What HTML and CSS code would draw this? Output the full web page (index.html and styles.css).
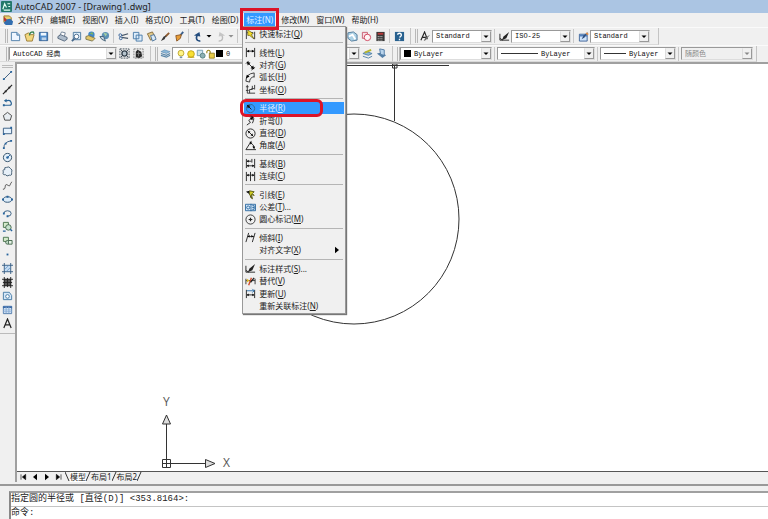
FILE: index.html
```html
<!DOCTYPE html>
<html lang="zh-CN">
<head>
  <meta charset="utf-8">
  <title>AutoCAD 2007 - [Drawing1.dwg]</title>
  <link rel="stylesheet" href="styles.css">
</head>
<body>
  <!-- icon sprite -->
  <svg class="sprite" aria-hidden="true">
    <symbol id="app" viewBox="0 0 12 12"><rect width="12" height="12" rx="1" fill="#23776b"/><path d="M2 9L4 3L6 7M7 3H10M8 6H10M3 10H10" stroke="#e5fff4" fill="none" stroke-width="1.3"/></symbol>
    <symbol id="dwg" viewBox="0 0 12 12"><path d="M1 1H7L9 3V8H1Z" fill="#e9d070" stroke="#98762a"/><path d="M3 5L8 4L11 7L10 11H3L1 9Z" fill="#326eb0"/><path d="M1 2L4 5L3 7L1 6Z" fill="#b33"/></symbol>
    <symbol id="new" viewBox="0 0 12 12"><path d="M1.500 1.500H7.500L10.500 4.500V10.500H1.500Z" fill="#eef6ff" stroke="#4d7da8"/><path d="M7.500 1.500V4.500H10.500" fill="#a8c9e6" stroke="#4d7da8"/></symbol>
    <symbol id="open" viewBox="0 0 12 12"><path d="M1 4L5 2L7 4H11L9 11H3Z" fill="#f2d67d" stroke="#9a7c34"/><path d="M6 5Q6 1 10 1L11 3" fill="none" stroke="#388452" stroke-width="1.500"/></symbol>
    <symbol id="save" viewBox="0 0 12 12"><path d="M1.500 1.500H10.500V10.500H1.500Z" fill="#4f8ccb" stroke="#315f94"/><path d="M3 2H9V5H3Z" fill="#eef7ff"/><path d="M4 7H9V10H4Z" fill="#bcd3ea"/></symbol>
    <symbol id="plot" viewBox="0 0 12 12"><path d="M3 5L5 1L9 2L8 6" fill="#fff" stroke="#6d7f94"/><path d="M1 6L4 4L11 7V9L8 11L1 8Z" fill="#aebccb" stroke="#53667b"/></symbol>
    <symbol id="preview" viewBox="0 0 12 12"><path d="M2.500 1.500H10.500V9.500H2.500Z" fill="#dcecf9" stroke="#4c789f"/><circle cx="6" cy="6" r="2.500" fill="#fff" stroke="#486a8c"/><path d="M4 8L1 11" stroke="#486a8c" stroke-width="2"/></symbol>
    <symbol id="publish" viewBox="0 0 12 12"><circle cx="7" cy="4" r="3.500" fill="#3f87c8"/><path d="M5 3L8 1L9 4Z" fill="#82b65d"/><path d="M1 6L4 5L11 8L8 11L1 9Z" fill="#e2c769" stroke="#7c7650"/></symbol>
    <symbol id="dwf" viewBox="0 0 12 12"><circle cx="7" cy="5" r="4" fill="#5e91b6"/><path d="M5 2L9 3L7 6Z" fill="#a5d09e"/><path d="M1 6H5L7 11L3 9Z" fill="#c8d6e2" stroke="#446075"/></symbol>
    <symbol id="cut" viewBox="0 0 12 12"><path d="M4 5L11 3M4 7L11 8" stroke="#4a5868" stroke-width="1.300"/><circle cx="2.500" cy="4.500" r="1.500" fill="none" stroke="#39659b"/><circle cx="3" cy="8" r="1.500" fill="none" stroke="#39659b"/></symbol>
    <symbol id="copy" viewBox="0 0 12 12"><path d="M1.500 1.500H7.500V8.500H1.500ZM4.500 4.500H11V11H4.500Z" fill="#dcecfa" stroke="#467aa8"/></symbol>
    <symbol id="paste" viewBox="0 0 12 12"><path d="M1.500 3L7 1L10 7L5 10Z" fill="#e4cb8b" stroke="#856936"/><path d="M5 5L9 4L11 9L7 11Z" fill="#d9eafa" stroke="#4b7399"/></symbol>
    <symbol id="brush" viewBox="0 0 12 12"><path d="M10 2L6 6" stroke="#8e5b30" stroke-width="2"/><path d="M7 5L5 9L1 11L4 6Z" fill="#343434"/></symbol>
    <symbol id="block" viewBox="0 0 12 12"><path d="M10 1L6 6" stroke="#375d8b" stroke-width="2"/><path d="M2 5L8 4L7 8L3 11Z" fill="#e69d37" stroke="#8d5724"/></symbol>
    <symbol id="undo" viewBox="0 0 12 12"><path d="M8 11C3 11 3 7 5 4" fill="none" stroke="#244d7e" stroke-width="1.800"/><path d="M1 5L7 1L8 6Z" fill="#244d7e"/></symbol>
    <symbol id="redo" viewBox="0 0 12 12"><path d="M4 11C9 11 9 7 7 4" fill="none" stroke="#bbb" stroke-width="1.500"/><path d="M11 5L5 1L4 6Z" fill="#c5c5c5"/></symbol>
    <symbol id="down" viewBox="0 0 12 12"><path d="M1 4H11L6 9Z"/></symbol>
    <symbol id="sheets" viewBox="0 0 12 12"><path d="M1 2L7 1L11 4V10L5 11L1 8Z" fill="#acd1e5" stroke="#50799a"/><path d="M2 6L6 4L9 9" fill="none" stroke="#fff" stroke-width="2"/></symbol>
    <symbol id="markup" viewBox="0 0 12 12"><path d="M1.500 1.500H7V8H1.500Z" fill="#f8dce2" stroke="#c75b70"/><circle cx="7" cy="7" r="3.500" fill="#fff4f5" stroke="#cd4058"/></symbol>
    <symbol id="calc" viewBox="0 0 12 12"><path d="M1.500 1H10.500V11H1.500Z" fill="#373737"/><path d="M3 2H9V4H3Z" fill="#b93838"/><path d="M3 6H9M3 8H9M3 10H9" stroke="#ddd" stroke-dasharray="1 1"/></symbol>
    <symbol id="help" viewBox="0 0 12 12"><path d="M1 1H11V11H1Z" fill="#28618f"/><path d="M4 4Q4 2.500 6 2.500T8 4.500Q8 5.500 6 7M6 8.500V10" stroke="#fff" fill="none" stroke-width="1.500"/></symbol>
    <symbol id="tstyle" viewBox="0 0 12 12"><path d="M1 10L5 1L8 9M3 7H7" fill="none" stroke="#222" stroke-width="1.200"/><path d="M11 4L6 10L4 11L6 7Z" fill="#666"/></symbol>
    <symbol id="dstyle" viewBox="0 0 12 12"><path d="M1 3V10H11M1 8L4 10" stroke="#222" fill="none"/><path d="M11 1L8 8L3 10L5 6Z" fill="#222"/></symbol>
    <symbol id="tablestyle" viewBox="0 0 12 12"><path d="M1.500 3.500H10V11H1.500Z" fill="#cfe3fa" stroke="#3c6397"/><path d="M2 4H10V6H2Z" fill="#517fbd"/><path d="M11 1L7 7L4 9L6 5Z" fill="#315080"/><path d="M9 2L11 4" stroke="#dd8b45" stroke-width="2"/></symbol>
    <symbol id="gear" viewBox="0 0 12 12"><path d="M1 1H11V11H1Z" fill="none" stroke="#3e4b57" stroke-dasharray="2 1"/><circle cx="6" cy="6" r="2.800" fill="#b7c5ce" stroke="#33414d" stroke-width="1.500"/><path d="M2 2L4 4M10 2L8 4M2 10L4 8M10 10L8 8" stroke="#33414d"/></symbol>
    <symbol id="wsave" viewBox="0 0 12 12"><path d="M1 1H11V11H1Z" fill="none" stroke="#777" stroke-dasharray="2 1"/><path d="M3 4L5 2L9 4L10 9L7 11L3 10Z" fill="#292929"/><path d="M4 6H8M6 4V9" stroke="#777"/></symbol>
    <symbol id="layers" viewBox="0 0 12 12"><path d="M1 4L5 2L11 4L7 6Z" fill="#8bb7d7" stroke="#5483aa" stroke-width=".6"/><path d="M1 6L7 8L11 6M1 8L7 10L11 8" fill="none" stroke="#5a86a8" stroke-width="1.300"/></symbol>
    <symbol id="layerprev" viewBox="0 0 12 12"><path d="M1 6L5 4L11 6L7 8Z" fill="#8eb9dc" stroke="#5381a6"/><path d="M1 9L7 11L11 9" fill="none" stroke="#5381a6"/><path d="M3 5L10 2" stroke="#b6b52e" stroke-width="2"/></symbol>
    <symbol id="layerstate" viewBox="0 0 12 12"><path d="M1 6L6 5L11 8L7 11Z" fill="#547fa7"/><path d="M4 1L9 2V8L5 7Z" fill="#b9d4ec" stroke="#507ba5"/></symbol>
    <symbol id="bulb" viewBox="0 0 12 12"><circle cx="6" cy="5" r="3.500" fill="#fff486" stroke="#b79e25"/><path d="M4.500 9H7.500V11H4.500Z" fill="#7692a6"/></symbol>
    <symbol id="sun" viewBox="0 0 12 12"><circle cx="6" cy="6" r="4" fill="#f8df34" stroke="#b99b12"/><path d="M2 10H10" stroke="#b99b12"/></symbol>
    <symbol id="vpfreeze" viewBox="0 0 12 12"><path d="M1.500 1.500H8V8H1.500Z" fill="#cfe3ed" stroke="#6a95ad"/><circle cx="8" cy="8" r="3" fill="#8db0b4" stroke="#527d80"/></symbol>
    <symbol id="lock" viewBox="0 0 12 12"><path d="M1 5V3Q3 0 5 3V6" fill="none" stroke="#99851b" stroke-width="1.300"/><path d="M4 5H10V11H4Z" fill="#e6cb48" stroke="#8b761c"/></symbol>

    <symbol id="line" viewBox="0 0 12 12"><path d="M2 10L10 2" stroke="#34557a"/><path d="M1 9H3V11H1ZM9 1H11V3H9Z" fill="#26639c"/></symbol>
    <symbol id="xline" viewBox="0 0 12 12"><path d="M1 11L11 1" stroke="#222" stroke-width="1.200"/><path d="M3 7H5V9H3ZM7 3H9V5H7Z" fill="#222"/></symbol>
    <symbol id="pline" viewBox="0 0 12 12"><path d="M1 9H8Q11 9 10 6T6 4H4" fill="none" stroke="#2a6496" stroke-width="1.300"/><path d="M5 2V6L2 4ZM1 8H3V10H1Z" fill="#2a6496"/></symbol>
    <symbol id="polygon" viewBox="0 0 12 12"><path d="M6 1.500L10.500 5L9 10H3L1.500 5Z" fill="#e8edf1" stroke="#444"/></symbol>
    <symbol id="rect" viewBox="0 0 12 12"><path d="M1.500 3.500H10.500V9.500H1.500Z" fill="#e6f2fd" stroke="#34597e"/><path d="M1 9H3V11H1ZM9 2H11V4H9Z" fill="#26639c"/></symbol>
    <symbol id="arc" viewBox="0 0 12 12"><path d="M2 10Q2 3 10 2" fill="none" stroke="#34597e"/><path d="M1 9H3V11H1ZM3 4H5V6H3ZM9 1H11V3H9Z" fill="#26639c"/></symbol>
    <symbol id="circle" viewBox="0 0 12 12"><circle cx="6" cy="6" r="4.500" fill="#e4f0fa" stroke="#2b4963"/><path d="M6 6L9 3" stroke="#26639c"/><circle cx="6" cy="6" r="1.400" fill="#26639c"/></symbol>
    <symbol id="cloud" viewBox="0 0 12 12"><path d="M3 4Q2 1 5 1.500Q8 0 9 2.500Q12 4 10.500 7Q11 11 8 10Q5 12 4 9.500Q0 10 1.500 6.500Q0 4 3 4Z" fill="#e7f0f8" stroke="#405a70"/></symbol>
    <symbol id="spline" viewBox="0 0 12 12"><path d="M1 10C5 11 2 3 6 5.500S8 4 11 2" fill="none" stroke="#444"/></symbol>
    <symbol id="ellipse" viewBox="0 0 12 12"><ellipse cx="6" cy="6" rx="4.500" ry="3" fill="#dcecf9" stroke="#254c70"/><path d="M0 5H2V7H0ZM10 5H12V7H10ZM5 2H7V4H5Z" fill="#26639c"/></symbol>
    <symbol id="earc" viewBox="0 0 12 12"><path d="M2 6Q2 3 6 3T10 6Q10 9 6 9" fill="none" stroke="#315b80"/><path d="M1 5H3V7H1ZM5 8H7V10H5Z" fill="#26639c"/></symbol>
    <symbol id="insert" viewBox="0 0 12 12"><path d="M1.500 1.500H7V7H1.500Z" fill="#d5eacb" stroke="#47724b"/><circle cx="7" cy="7" r="3" fill="#c7e2cd" stroke="#42664a"/><path d="M1 11H4M9 9L11 11" stroke="#26639c" stroke-width="1.500"/></symbol>
    <symbol id="mkblock" viewBox="0 0 12 12"><path d="M1.500 2.500H7V7H1.500Z" fill="#d5eacb" stroke="#47724b"/><circle cx="6" cy="8" r="2" fill="#c7e2cd" stroke="#42664a"/><path d="M7 6H11V10H7Z" fill="#e5f2e5" stroke="#42664a"/></symbol>
    <symbol id="point" viewBox="0 0 12 12"><path d="M5 5H7V7H5Z" fill="#26639c"/></symbol>
    <symbol id="hatch" viewBox="0 0 12 12"><path d="M2.500 2.500H9.500V9.500H2.500Z" fill="#c7def4"/><path d="M2.500 0V12M9.500 0V12M0 2.500H12M0 9.500H12" stroke="#355c82"/><path d="M3 7L7 3M5 9L9 5" stroke="#6c9bc8"/></symbol>
    <symbol id="gradient" viewBox="0 0 12 12"><path d="M2 2H10V10H2Z" fill="#555"/><path d="M2.500 0V12M9.500 0V12M0 2.500H12M0 9.500H12M6 1V11M1 6H11" stroke="#222"/></symbol>
    <symbol id="region" viewBox="0 0 12 12"><path d="M1.500 2.500H8L10.500 6V10.500H1.500Z" fill="#d7e8f8" stroke="#4378a4"/><circle cx="6" cy="7" r="2" fill="#fff" stroke="#4378a4"/></symbol>
    <symbol id="table" viewBox="0 0 12 12"><path d="M1.500 2.500H10.500V10.500H1.500Z" fill="#e9f3fe" stroke="#4a77a8"/><path d="M1 3.500H11" stroke="#3a6aa6" stroke-width="2"/><path d="M1 6.500H11M1 8.500H11M4.500 3V10M7.500 3V10" stroke="#83a9d2"/></symbol>
    <symbol id="mtext" viewBox="0 0 12 12"><path d="M2 11L6 1L10 11M3.500 7.500H8.500" stroke="#222" fill="none" stroke-width="1.300"/></symbol>

    <symbol id="quick" viewBox="0 0 12 12"><path d="M1.500 1V11M10.500 3V11M2 4H9" stroke="#333" fill="none"/><path d="M3 1L9 5L7 6L10 11L5 7L3 7Z" fill="#f2dc28" stroke="#4f4a18" stroke-width=".7"/></symbol>
    <symbol id="linear" viewBox="0 0 12 12"><path d="M1.500 1V11M10.500 1V11M2 4.500H10" stroke="#222"/><path d="M2 4.500L4.500 3V6ZM10 4.500L7.500 3V6Z"/></symbol>
    <symbol id="aligned" viewBox="0 0 12 12"><path d="M1 4L4 1M7 11L11 8M3 3L9 9" stroke="#222"/><path d="M2 2L6 3L3 6ZM10 10L6 9L9 6Z"/></symbol>
    <symbol id="arclen" viewBox="0 0 12 12"><path d="M1 10Q1 2 10 1M5 11Q5 6 10 5M1 10L5 11M10 1V6" fill="none" stroke="#333"/><path d="M1 7L2 3L5 5Z"/></symbol>
    <symbol id="ordinate" viewBox="0 0 12 12"><path d="M2.500 1V10H11M5 10V6H8V2M10.500 1V6" fill="none" stroke="#333"/><path d="M1 3H4M1 7H4M7 5H10" stroke="#333"/></symbol>
    <symbol id="radius" viewBox="0 0 12 12"><circle cx="6" cy="6" r="4.500" fill="none" stroke="#33678e"/><path d="M7 7L3 3" stroke="#111"/><path d="M2 2L6 3L3 6Z" fill="#111"/></symbol>
    <symbol id="jogged" viewBox="0 0 12 12"><path d="M2 11L6 8L4 6L8 3M6 1Q12 2 8 9" fill="none" stroke="#222"/><path d="M9 2L5 3L8 6Z"/></symbol>
    <symbol id="diameter" viewBox="0 0 12 12"><circle cx="6" cy="6" r="5" fill="none" stroke="#222"/><path d="M3 3L9 9" stroke="#222"/><path d="M3 3L6 4L4 6ZM9 9L6 8L8 6Z"/></symbol>
    <symbol id="angular" viewBox="0 0 12 12"><path d="M7 1L1 10.500H12M6 3Q10 5 10 9" fill="none" stroke="#222"/><path d="M5 2L8 3L6 5ZM8 7H11L10 10Z"/></symbol>
    <symbol id="baseline" viewBox="0 0 12 12"><path d="M1.500 1V11M7.500 1V5M10.500 1V11M2 3.500H7M2 8.500H10" stroke="#222"/><path d="M2 3.500L4 2V5ZM2 8.500L4 7V10ZM10 8.500L8 7V10Z"/></symbol>
    <symbol id="continue" viewBox="0 0 12 12"><path d="M1.500 1V11M6 1V11M10.500 1V11M2 4.500H10" stroke="#222"/><path d="M2 4.500L4 3V6ZM10 4.500L8 3V6Z"/></symbol>
    <symbol id="leader" viewBox="0 0 12 12"><path d="M1 3L5 2L4 5Z"/><path d="M3 3L6 7V9H8" fill="none" stroke="#222"/><path d="M5 2L10 3L8 5L10 7L7 6L8 11L5 6Z" fill="#d5d324" stroke="#555613"/></symbol>
    <symbol id="tolerance" viewBox="0 0 12 12"><path d="M.5 2.500H11.500V9.500H.5ZM6.500 2V10" fill="#d7e9fb" stroke="#29679e"/><circle cx="3.500" cy="6" r="1.700" fill="none" stroke="#29679e"/><path d="M8 4H10V8H8M8 6H10" fill="none" stroke="#29679e"/></symbol>
    <symbol id="center" viewBox="0 0 12 12"><circle cx="6" cy="6" r="5" fill="none" stroke="#333"/><path d="M6 4V8M4 6H8" stroke="#222" stroke-width="1.300"/></symbol>
    <symbol id="oblique" viewBox="0 0 12 12"><path d="M1 11L4 1M8 11L11 1M3 5H10" stroke="#222"/><path d="M3 5L5 3V6ZM9 5L7 3V6Z"/></symbol>
    <symbol id="override" viewBox="0 0 12 12"><path d="M1 3V9M11 3V9M1 5H11" stroke="#333"/><path d="M4 10L7 2" stroke="#d14b2b" stroke-width="1.500"/><path d="M2 3L5 5L2 7Z" fill="#e0b824"/><path d="M6 7L10 2" stroke="#222" stroke-width="1.500"/></symbol>
    <symbol id="update" viewBox="0 0 12 12"><path d="M1.500 2V11M10.500 2V11M2 7.500H10" stroke="#222"/><path d="M2 7.500L4 6V9ZM10 7.500L8 6V9Z"/><path d="M2 3H10M8 1L10 3L8 5" fill="none" stroke="#276dab"/></symbol>

    <symbol id="first" viewBox="0 0 12 12"><path d="M3 2V10M10 2L5 6L10 10Z" stroke="#111"/></symbol>
    <symbol id="prev" viewBox="0 0 12 12"><path d="M9 1L3 6L9 11Z"/></symbol>
    <symbol id="next" viewBox="0 0 12 12"><path d="M3 1L9 6L3 11Z"/></symbol>
    <symbol id="last" viewBox="0 0 12 12"><path d="M9 2V10M2 2L7 6L2 10Z" stroke="#111"/></symbol>
  </svg>

  <header class="titleBar">
    <svg class="icon"><use href="#app"/></svg>
    <h1>AutoCAD 2007 - [Drawing1.dwg]</h1>
  </header>

  <nav class="menuBar">
    <svg class="icon"><use href="#dwg"/></svg>
    <button>文件(F)</button>
    <button>编辑(E)</button>
    <button>视图(V)</button>
    <button>插入(I)</button>
    <button>格式(O)</button>
    <button>工具(T)</button>
    <button>绘图(D)</button>
    <div class="menuHolder">
      <button class="open">标注(N)</button>
      <div class="menu">
        <button><svg class="icon"><use href="#quick"/></svg>快速标注(<u>Q</u>)</button>
        <hr>
        <button><svg class="icon"><use href="#linear"/></svg>线性(<u>L</u>)</button>
        <button><svg class="icon"><use href="#aligned"/></svg>对齐(<u>G</u>)</button>
        <button><svg class="icon"><use href="#arclen"/></svg>弧长(<u>H</u>)</button>
        <button><svg class="icon"><use href="#ordinate"/></svg>坐标(<u>O</u>)</button>
        <hr>
        <button class="selected"><svg class="icon"><use href="#radius"/></svg>半径(<u>R</u>)<span class="itemMark"></span></button>
        <button><svg class="icon"><use href="#jogged"/></svg>折弯(<u>J</u>)</button>
        <button><svg class="icon"><use href="#diameter"/></svg>直径(<u>D</u>)</button>
        <button><svg class="icon"><use href="#angular"/></svg>角度(<u>A</u>)</button>
        <hr>
        <button><svg class="icon"><use href="#baseline"/></svg>基线(<u>B</u>)</button>
        <button><svg class="icon"><use href="#continue"/></svg>连续(<u>C</u>)</button>
        <hr>
        <button><svg class="icon"><use href="#leader"/></svg>引线(<u>E</u>)</button>
        <button><svg class="icon"><use href="#tolerance"/></svg>公差(<u>T</u>)...</button>
        <button><svg class="icon"><use href="#center"/></svg>圆心标记(<u>M</u>)</button>
        <hr>
        <button><svg class="icon"><use href="#oblique"/></svg>倾斜(<u>I</u>)</button>
        <button><svg class="icon"></svg>对齐文字(<u>X</u>)<svg class="more"><use href="#next"/></svg></button>
        <hr>
        <button><svg class="icon"><use href="#dstyle"/></svg>标注样式(<u>S</u>)...</button>
        <button><svg class="icon"><use href="#override"/></svg>替代(<u>V</u>)</button>
        <button><svg class="icon"><use href="#update"/></svg>更新(<u>U</u>)</button>
        <button><svg class="icon"></svg>重新关联标注(<u>N</u>)</button>
      </div>
      <span class="menuMark"></span>
    </div>
    <button>修改(M)</button>
    <button>窗口(W)</button>
    <button>帮助(H)</button>
  </nav>

  <div class="toolRow">
    <div class="toolbar standard">
      <div class="tools">
        <button aria-label="新建"><svg class="icon"><use href="#new"/></svg></button>
        <button aria-label="打开"><svg class="icon"><use href="#open"/></svg></button>
        <button aria-label="保存"><svg class="icon"><use href="#save"/></svg></button>
        <i class="sep"></i>
        <button aria-label="打印"><svg class="icon"><use href="#plot"/></svg></button>
        <button aria-label="打印预览"><svg class="icon"><use href="#preview"/></svg></button>
        <button aria-label="发布"><svg class="icon"><use href="#publish"/></svg></button>
        <button aria-label="三维 DWF"><svg class="icon"><use href="#dwf"/></svg></button>
        <i class="sep"></i>
        <button aria-label="剪切"><svg class="icon"><use href="#cut"/></svg></button>
        <button aria-label="复制"><svg class="icon"><use href="#copy"/></svg></button>
        <button aria-label="粘贴"><svg class="icon"><use href="#paste"/></svg></button>
        <button aria-label="特性匹配"><svg class="icon"><use href="#brush"/></svg></button>
        <button aria-label="块编辑器"><svg class="icon"><use href="#block"/></svg></button>
        <i class="sep"></i>
        <button aria-label="放弃"><svg class="icon"><use href="#undo"/></svg></button>
        <button class="small" aria-label="放弃列表"><svg><use href="#down"/></svg></button>
        <button aria-label="重做"><svg class="icon"><use href="#redo"/></svg></button>
        <button class="small" aria-label="重做列表" disabled><svg><use href="#down"/></svg></button>
        <i class="sep"></i>
      </div>
      <div class="tools">
        <button aria-label="图纸集"><svg class="icon"><use href="#sheets"/></svg></button>
        <button aria-label="标记集"><svg class="icon"><use href="#markup"/></svg></button>
        <button aria-label="计算器"><svg class="icon"><use href="#calc"/></svg></button>
        <i class="sep"></i>
        <button aria-label="帮助"><svg class="icon"><use href="#help"/></svg></button>
      </div>
    </div>
    <div class="toolbar styles">
      <button aria-label="文字样式"><svg class="icon"><use href="#tstyle"/></svg></button>
      <div class="combo w60"><select aria-label="文字样式名"><option>Standard</option></select><svg class="arrow"><use href="#down"/></svg></div>
      <i class="sep"></i>
      <button aria-label="标注样式"><svg class="icon"><use href="#dstyle"/></svg></button>
      <div class="combo w60"><select aria-label="标注样式名"><option>ISO-25</option></select><svg class="arrow"><use href="#down"/></svg></div>
      <i class="sep"></i>
      <button aria-label="表格样式"><svg class="icon"><use href="#tablestyle"/></svg></button>
      <div class="combo w60"><select aria-label="表格样式名"><option>Standard</option></select><svg class="arrow"><use href="#down"/></svg></div>
    </div>
  </div>

  <div class="toolRow">
    <div class="toolbar workspace">
      <div class="combo grow"><select aria-label="工作空间"><option>AutoCAD 经典</option></select><svg class="arrow"><use href="#down"/></svg></div>
      <button aria-label="工作空间设置"><svg class="icon"><use href="#gear"/></svg></button>
      <button aria-label="我的工作空间"><svg class="icon"><use href="#wsave"/></svg></button>
    </div>
    <div class="toolbar layer">
      <button aria-label="图层特性"><svg class="icon"><use href="#layers"/></svg></button>
      <div class="combo grow">
        <svg class="state"><use href="#bulb"/></svg><svg class="state"><use href="#sun"/></svg><svg class="state"><use href="#vpfreeze"/></svg><svg class="state"><use href="#lock"/></svg><i class="swatch"></i>
        <select aria-label="图层"><option>0</option></select><svg class="arrow"><use href="#down"/></svg>
      </div>
      <button aria-label="置为当前"><svg class="icon"><use href="#layerprev"/></svg></button>
      <button aria-label="上一个图层"><svg class="icon"><use href="#layerstate"/></svg></button>
    </div>
    <div class="toolbar props">
      <div class="combo w92"><i class="swatch"></i><select aria-label="颜色"><option>ByLayer</option></select><svg class="arrow"><use href="#down"/></svg></div>
      <i class="sep"></i>
      <div class="combo w98"><i class="stroke"></i><select aria-label="线型"><option>ByLayer</option></select><svg class="arrow"><use href="#down"/></svg></div>
      <i class="sep"></i>
      <div class="combo w76"><i class="stroke short"></i><select aria-label="线宽"><option>ByLayer</option></select><svg class="arrow"><use href="#down"/></svg></div>
      <i class="sep"></i>
      <div class="combo w72 off"><select aria-label="打印样式" disabled><option>随颜色</option></select><svg class="arrow"><use href="#down"/></svg></div>
    </div>
  </div>

  <main class="workArea">
    <div class="drawBar">
      <button aria-label="直线"><svg class="icon"><use href="#line"/></svg></button>
      <button aria-label="构造线"><svg class="icon"><use href="#xline"/></svg></button>
      <button aria-label="多段线"><svg class="icon"><use href="#pline"/></svg></button>
      <button aria-label="正多边形"><svg class="icon"><use href="#polygon"/></svg></button>
      <button aria-label="矩形"><svg class="icon"><use href="#rect"/></svg></button>
      <button aria-label="圆弧"><svg class="icon"><use href="#arc"/></svg></button>
      <button aria-label="圆"><svg class="icon"><use href="#circle"/></svg></button>
      <button aria-label="修订云线"><svg class="icon"><use href="#cloud"/></svg></button>
      <button aria-label="样条曲线"><svg class="icon"><use href="#spline"/></svg></button>
      <button aria-label="椭圆"><svg class="icon"><use href="#ellipse"/></svg></button>
      <button aria-label="椭圆弧"><svg class="icon"><use href="#earc"/></svg></button>
      <button aria-label="插入块"><svg class="icon"><use href="#insert"/></svg></button>
      <button aria-label="创建块"><svg class="icon"><use href="#mkblock"/></svg></button>
      <button aria-label="点"><svg class="icon"><use href="#point"/></svg></button>
      <button aria-label="图案填充"><svg class="icon"><use href="#hatch"/></svg></button>
      <button aria-label="渐变色"><svg class="icon"><use href="#gradient"/></svg></button>
      <button aria-label="面域"><svg class="icon"><use href="#region"/></svg></button>
      <button aria-label="表格"><svg class="icon"><use href="#table"/></svg></button>
      <button aria-label="多行文字"><svg class="icon"><use href="#mtext"/></svg></button>
    </div>
    <div class="drawing">
      <svg class="canvas">
        <g fill="none" stroke="#333">
          <circle cx="337" cy="155" r="105"/>
          <!-- crosshair -->
          <path d="M330 1.500H432M377.500 1V57M375.500 0H380V4H375.500Z"/>
          <!-- UCS icon -->
          <path d="M149.500 399V359M149.500 399.500H188M145.500 395.500H153.500V403.500H145.500ZM149.500 395V403M146 399.500H153"/>
          <path d="M149.500 351L153.500 360H145.500ZM198 399.500L188.500 395.500V403.500Z" fill="#ddd"/>
        </g>
        <text x="146" y="342">Y</text>
        <text x="206" y="403">X</text>
      </svg>
      <div class="tabs">
        <button aria-label="第一个"><svg><use href="#first"/></svg></button>
        <button aria-label="上一个"><svg><use href="#prev"/></svg></button>
        <button aria-label="下一个"><svg><use href="#next"/></svg></button>
        <button aria-label="最后一个"><svg><use href="#last"/></svg></button>
        <svg class="slash"><path d="M0 0L4 9"/></svg>
        <button class="tab current">模型</button>
        <svg class="slash"><path d="M4 0L0 9"/></svg>
        <button class="tab">布局1</button>
        <svg class="slash"><path d="M4 0L0 9"/></svg>
        <button class="tab">布局2</button>
        <svg class="slash"><path d="M4 0L0 9"/></svg>
      </div>
    </div>
  </main>

  <footer class="command">
    <div class="commandBox">
      <p>指定圆的半径或 [直径(D)] &lt;353.8164&gt;:</p>
      <div class="prompt"><label for="cmd">命令:</label><input type="text" id="cmd"></div>
    </div>
  </footer>
</body>
</html>
```
FILE: styles.css
```css
* {
  box-sizing: border-box;
}

body {
  display: flex;
  flex-direction: column;
  height: 100vh;
  margin: 0;
  overflow: hidden;
  background-color: #f0f0f0;
  color: #222;
  font-family: "Noto Sans", "Noto Sans CJK SC", sans-serif;
  font-size: 8px;
  line-height: 12px;
}

button {
  display: flex;
  align-items: center;
  justify-content: center;
  flex-shrink: 0;
  margin: 0;
  padding: 0;
  border: 0;
  background: none;
  color: inherit;
  font: inherit;
  white-space: nowrap;
}

.sprite {
  display: none;
}

.icon {
  flex-shrink: 0;
  width: 11px;
  height: 11px;
}

.titleBar {
  display: flex;
  align-items: center;
  gap: 3px;
  height: 13px;
  padding-left: 1px;
  background-color: #abc5e3;
}

h1 {
  margin: 0;
  font-family: "Noto Sans", sans-serif;
  font-size: 9px;
  font-weight: normal;
}

/* menu bar */
.menuBar {
  display: flex;
  align-items: center;
  height: 14px;
  padding-left: 3px;
}

.menuBar > button {
  padding: 0 3px 0 4px;
}

.menuHolder {
  position: relative;
  margin-left: 1px;
}

.menuHolder .open {
  height: 14px;
  padding: 0 2px;
  margin: 0 2px;
  background-color: #3399ff;
  color: #e4f1ff;
}

.menuMark {
  position: absolute;
  top: -5px;
  left: -2px;
  right: -2px;
  bottom: -3px;
  z-index: 3;
  border: 3px solid #dc1428;
}

.menu {
  display: flex;
  flex-direction: column;
  position: absolute;
  top: 13px;
  left: 0;
  z-index: 2;
  width: 104px;
  height: 288px;
  padding: 1px;
  border: 1px solid #999;
  background-color: #f0f0f0;
  box-shadow: 1px 1px 1px #777;
}

.menu button {
  position: relative;
  flex: 1 1 0;
  min-height: 0;
  justify-content: flex-start;
  padding-left: 1px;
}

.menu .icon {
  margin-right: 3px;
}

.menu hr {
  width: 98%;
  height: 1px;
  margin: 2px auto 3px;
  border: 0;
  background-color: #b5b5b5;
}

.menu .selected {
  background-color: #3399ff;
  color: #e4f1ff;
}

.itemMark {
  position: absolute;
  top: -3px;
  left: -4px;
  width: 83px;
  height: 18px;
  border: 3px solid #dc1428;
  border-radius: 6px;
}

.menu .more {
  width: 8px;
  height: 8px;
  margin-left: auto;
  margin-right: 3px;
}

/* toolbars */
.toolRow {
  display: flex;
  height: 18px;
  border-top: 1px solid #fafafa;
}

.toolRow + .toolRow {
  height: 17px;
}

.toolbar {
  display: flex;
  align-items: center;
  flex-shrink: 0;
  padding-left: 7px;
  border-right: 1px solid #c4c4c4;
  border-bottom: 1px solid #dadada;
}

.toolbar::before {
  content: "";
  width: 1px;
  height: 14px;
  margin-left: -3px;
  border-left: 1px solid #b8b8b8;
  border-right: 1px solid #b8b8b8;
}

.toolbar button {
  width: 14px;
  height: 14px;
}

.toolbar .small {
  width: 8px;
}

.small svg {
  width: 6px;
  height: 6px;
}

.small:disabled {
  opacity: 0.4;
}

.tools {
  display: flex;
}

.sep {
  width: 1px;
  height: 14px;
  margin: 0 2px;
  background-color: #c8c8c8;
}

.standard {
  width: 411px;
  justify-content: space-between;
  padding-left: 8px;
  padding-right: 4px;
}

.standard .tools:first-of-type {
  margin-right: auto;
}

.styles {
  padding-right: 8px;
}

.workspace {
  width: 151px;
  padding-left: 9px;
  padding-right: 5px;
}

.layer {
  width: 242px;
  padding-right: 4px;
}

.props {
  padding-right: 3px;
}

.combo {
  display: flex;
  align-items: center;
  flex-shrink: 0;
  height: 13px;
  padding-left: 3px;
  border: 1px solid #999;
  border-right-color: #ddd;
  border-bottom-color: #ddd;
  background-color: #fff;
}

.combo select {
  flex: 1;
  min-width: 0;
  height: 11px;
  padding: 0;
  border: 0;
  outline: 0;
  appearance: none;
  background: none;
  color: #111;
  font: 7px "Liberation Mono", "Noto Sans CJK SC", monospace;
}

.arrow {
  flex-shrink: 0;
  width: 10px;
  height: 11px;
  padding: 1px;
  border: 1px solid #999;
  border-top-color: #eee;
  border-left-color: #ddd;
  background-color: #f0f0f0;
  pointer-events: none;
}

.grow {
  flex: 1;
}

.w60 {
  width: 60px;
}

.w92 {
  width: 92px;
}

.w98 {
  width: 98px;
}

.w76 {
  width: 76px;
}

.w72 {
  width: 72px;
}

.off {
  background-color: #f0f0f0;
}

.off select {
  color: #888;
  opacity: 1;
}

.off .arrow {
  fill: #888;
}

.state {
  width: 10px;
  height: 10px;
}

.swatch {
  width: 7px;
  height: 7px;
  margin-right: 3px;
  background-color: #000;
}

.stroke {
  width: 37px;
  height: 1px;
  margin-right: 3px;
  background-color: #333;
}

.short {
  width: 22px;
}

/* drawing area */
.workArea {
  display: flex;
  flex: 1;
  min-height: 0;
}

.drawBar {
  display: flex;
  flex-direction: column;
  align-items: center;
  justify-content: space-between;
  width: 15px;
  height: 272px;
  padding: 3px 0;
  border-bottom: 1px solid #bbb;
}

.drawBar::before {
  content: "";
  width: 11px;
  height: 1px;
  border-top: 1px solid #bbb;
  border-bottom: 1px solid #bbb;
}

.drawBar button {
  width: 14px;
  height: 13px;
}

.drawing {
  display: flex;
  flex: 1;
  flex-direction: column;
  min-width: 0;
  border-top: 2px solid #a0a0a0;
  border-left: 2px solid #a0a0a0;
}

.canvas {
  flex: 1;
  width: 100%;
  min-height: 0;
  background-color: #fff;
}

.canvas text {
  fill: #555;
  font-family: "Open Sans", sans-serif;
  font-size: 12px;
}

.tabs {
  display: flex;
  align-items: center;
  height: 11px;
  border-top: 1px solid #555;
}

.tabs button {
  width: 12px;
  height: 10px;
}

.tabs button svg {
  width: 8px;
  height: 8px;
}

.tabs .tab {
  width: auto;
}

.tabs .current {
  background-color: #fff;
}

.slash {
  width: 5px;
  height: 10px;
  fill: none;
  stroke: #333;
}

/* command line */
.command {
  margin-top: 2px;
  padding: 5px 0 0 9px;
  border-top: 2px solid #999;
}

.commandBox {
  border-top: 2px solid #a0a0a0;
  border-left: 2px solid #888;
  background-color: #fff;
  font: 9px/14px "Liberation Mono", "Noto Sans CJK SC", monospace;
}

.commandBox p {
  height: 14px;
  margin: 0;
  border-bottom: 1px solid #c4c4c4;
  line-height: 12px;
}

.prompt {
  display: flex;
  height: 12px;
  line-height: 12px;
}

.prompt input {
  flex: 1;
  padding: 0;
  border: 0;
  outline: 0;
  background: none;
  font: inherit;
}
```
